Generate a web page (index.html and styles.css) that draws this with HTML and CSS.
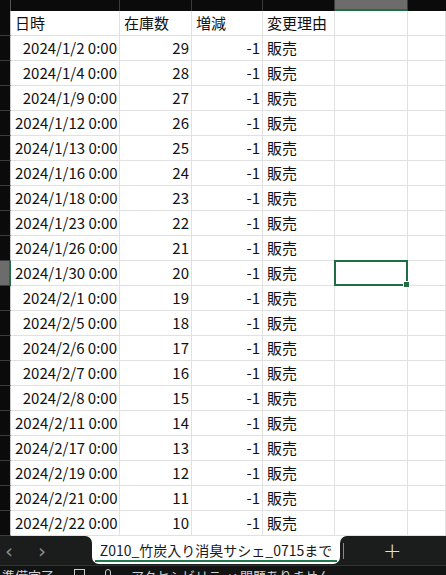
FILE: index.html
```html
<!DOCTYPE html>
<html lang="ja">
<head>
<meta charset="utf-8">
<link rel="stylesheet" href="styles.css">
</head>
<body>
<div class="sheet">
  <div class="ch corner"></div><div class="ch"></div><div class="ch"></div><div class="ch"></div><div class="ch"></div><div class="ch ch-sel"></div><div class="ch last"></div>

  <div class="rh"></div><div class="c">日時</div><div class="c">在庫数</div><div class="c">増減</div><div class="c">変更理由</div><div class="c"></div><div class="c"></div>

  <div class="rh"></div><div class="c r">2024/1/2 0:00</div><div class="c r">29</div><div class="c r">-1</div><div class="c">販売</div><div class="c"></div><div class="c"></div>
  <div class="rh"></div><div class="c r">2024/1/4 0:00</div><div class="c r">28</div><div class="c r">-1</div><div class="c">販売</div><div class="c"></div><div class="c"></div>
  <div class="rh"></div><div class="c r">2024/1/9 0:00</div><div class="c r">27</div><div class="c r">-1</div><div class="c">販売</div><div class="c"></div><div class="c"></div>
  <div class="rh"></div><div class="c r">2024/1/12 0:00</div><div class="c r">26</div><div class="c r">-1</div><div class="c">販売</div><div class="c"></div><div class="c"></div>
  <div class="rh"></div><div class="c r">2024/1/13 0:00</div><div class="c r">25</div><div class="c r">-1</div><div class="c">販売</div><div class="c"></div><div class="c"></div>
  <div class="rh"></div><div class="c r">2024/1/16 0:00</div><div class="c r">24</div><div class="c r">-1</div><div class="c">販売</div><div class="c"></div><div class="c"></div>
  <div class="rh"></div><div class="c r">2024/1/18 0:00</div><div class="c r">23</div><div class="c r">-1</div><div class="c">販売</div><div class="c"></div><div class="c"></div>
  <div class="rh"></div><div class="c r">2024/1/23 0:00</div><div class="c r">22</div><div class="c r">-1</div><div class="c">販売</div><div class="c"></div><div class="c"></div>
  <div class="rh"></div><div class="c r">2024/1/26 0:00</div><div class="c r">21</div><div class="c r">-1</div><div class="c">販売</div><div class="c"></div><div class="c"></div>
  <div class="rh rh-sel"></div><div class="c r">2024/1/30 0:00</div><div class="c r">20</div><div class="c r">-1</div><div class="c">販売</div><div class="c sel"></div><div class="c"></div>
  <div class="rh"></div><div class="c r">2024/2/1 0:00</div><div class="c r">19</div><div class="c r">-1</div><div class="c">販売</div><div class="c"></div><div class="c"></div>
  <div class="rh"></div><div class="c r">2024/2/5 0:00</div><div class="c r">18</div><div class="c r">-1</div><div class="c">販売</div><div class="c"></div><div class="c"></div>
  <div class="rh"></div><div class="c r">2024/2/6 0:00</div><div class="c r">17</div><div class="c r">-1</div><div class="c">販売</div><div class="c"></div><div class="c"></div>
  <div class="rh"></div><div class="c r">2024/2/7 0:00</div><div class="c r">16</div><div class="c r">-1</div><div class="c">販売</div><div class="c"></div><div class="c"></div>
  <div class="rh"></div><div class="c r">2024/2/8 0:00</div><div class="c r">15</div><div class="c r">-1</div><div class="c">販売</div><div class="c"></div><div class="c"></div>
  <div class="rh"></div><div class="c r">2024/2/11 0:00</div><div class="c r">14</div><div class="c r">-1</div><div class="c">販売</div><div class="c"></div><div class="c"></div>
  <div class="rh"></div><div class="c r">2024/2/17 0:00</div><div class="c r">13</div><div class="c r">-1</div><div class="c">販売</div><div class="c"></div><div class="c"></div>
  <div class="rh"></div><div class="c r">2024/2/19 0:00</div><div class="c r">12</div><div class="c r">-1</div><div class="c">販売</div><div class="c"></div><div class="c"></div>
  <div class="rh"></div><div class="c r">2024/2/21 0:00</div><div class="c r">11</div><div class="c r">-1</div><div class="c">販売</div><div class="c"></div><div class="c"></div>
  <div class="rh"></div><div class="c r">2024/2/22 0:00</div><div class="c r">10</div><div class="c r">-1</div><div class="c">販売</div><div class="c"></div><div class="c"></div>
</div>

<div class="tabbar">
  <div class="nav">
    <span class="arrow">&lsaquo;</span>
    <span class="arrow">&rsaquo;</span>
  </div>
  <div class="tab"><div class="tab-inner"><span class="tab-label">Z010_竹炭入り消臭サシェ_0715まで</span></div></div>
  <div class="rest">
    <span class="sep"></span>
    <span class="plus">+</span>
  </div>
</div>
<div class="status">
  <span class="st-text">準備完了</span>
  <span class="st-box"></span>
  <span class="st-icon"></span>
  <span class="st-text">アクセシビリティ: 問題ありません</span>
</div>
</body>
</html>
```

FILE: styles.css
```css
html, body {
  margin: 0;
  padding: 0;
}
body {
  width: 446px;
  height: 575px;
  overflow: hidden;
  background: #ffffff;
  font-family: "Noto Sans CJK JP", "Noto Sans", sans-serif;
  color: #111;
}
.sheet {
  display: grid;
  grid-template-columns: 11px 109px 72px 71px 72px 73px 1fr;
  grid-template-rows: 11px repeat(21, 25px);
}
.ch {
  background: #0b0b0b;
  border-right: 1px solid #3a3a3a;
  box-sizing: border-box;
}
.ch.corner {
  border-right: 1px solid #555;
}
.ch.last {
  border-right: none;
}
.ch-sel {
  background: #6c6c6c;
  border-bottom: 2px solid #1f6e43;
}
.rh {
  background: #0b0b0b;
  border-bottom: 1px solid #3c3c3c;
  border-right: 1px solid #c8c8c8;
  box-sizing: border-box;
}
.rh-sel {
  background: #6c6c6c;
  border-right: 2px solid #1f6e43;
}
.c {
  border-right: 1px solid #e1e1e1;
  border-bottom: 1px solid #e1e1e1;
  box-sizing: border-box;
  padding: 0 3px 0 4px;
  font-size: 15px;
  line-height: 24px;
  white-space: nowrap;
  overflow: visible;
}
.c.r {
  text-align: right;
  padding-right: 2px;
}
.sel {
  position: relative;
}
.sel::after {
  content: "";
  position: absolute;
  left: -1px;
  top: -1px;
  right: -1px;
  bottom: -1px;
  border: 2px solid #1f6e43;
}
.sel::before {
  content: "";
  position: absolute;
  right: -3px;
  bottom: -3px;
  width: 5px;
  height: 5px;
  background: #1f6e43;
  border: 1px solid #fff;
  z-index: 2;
}
.tabbar {
  display: flex;
  height: 29px;
  background: #ffffff;
}
.nav {
  width: 92px;
  background: #1b1c1c;
  border-top-right-radius: 7px;
  display: flex;
  align-items: center;
  padding-left: 5px;
  gap: 25px;
  box-sizing: border-box;
}
.arrow {
  color: #8a8a8a;
  font-family: "DejaVu Sans", sans-serif;
  font-size: 20px;
  line-height: 20px;
}
.tab {
  width: 248px;
  background: #1b1c1c;
}
.tab-inner {
  height: 28px;
  background: #ffffff;
  border-bottom-left-radius: 7px;
  border-bottom-right-radius: 7px;
  display: flex;
  justify-content: center;
  align-items: flex-start;
}
.tab-label {
  font-size: 14px;
  line-height: 20px;
  color: #1a1a1a;
  padding: 4px 5px 0;
  border-bottom: 2px solid #1f7a4e;
  white-space: nowrap;
}
.rest {
  flex: 1;
  background: #1b1c1c;
  border-top-left-radius: 7px;
  display: flex;
  align-items: center;
  position: relative;
}
.sep {
  width: 1px;
  height: 16px;
  background: #8a8a8a;
  margin-left: 3px;
}
.plus {
  color: #e0e0e0;
  font-family: "DejaVu Sans", sans-serif;
  font-size: 22px;
  font-weight: 300;
  line-height: 22px;
  margin-left: 39px;
}
.status {
  height: 10px;
  background: #121313;
  border-top: 1px solid #333;
  display: flex;
  align-items: flex-start;
  gap: 20px;
  overflow: hidden;
  padding-left: 2px;
}
.st-text {
  color: #d0d0d0;
  font-size: 13px;
  line-height: 13px;
  margin-top: 3px;
  white-space: nowrap;
}
.st-box {
  width: 11px;
  height: 10px;
  border: 1px solid #ccc;
  margin-top: 3px;
  box-sizing: border-box;
}
.st-icon {
  width: 6px;
  height: 8px;
  border: 1px solid #ccc;
  border-radius: 3px 3px 0 0;
  margin-top: 3px;
  box-sizing: border-box;
}
```
